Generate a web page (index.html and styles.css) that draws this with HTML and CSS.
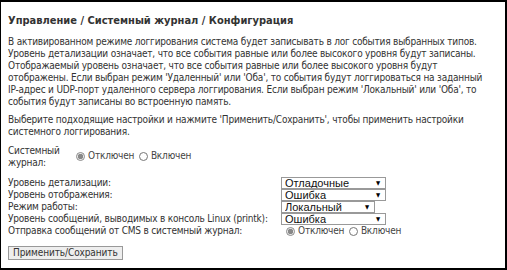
FILE: index.html
```html
<!DOCTYPE html>
<html lang="ru">
<head>
    <meta charset="UTF-8">
    <title>Системный журнал</title>
    <link rel="stylesheet" href="styles.css">
</head>
<body>
    <div class="frame">
        <div class="title">Управление / Системный журнал / Конфигурация</div>

        <p class="info">В активированном режиме логгирования система будет записывать в лог события выбранных типов.<br>
            Уровень детализации означает, что все события равные или более высокого уровня будут записаны.<br>
            Отображаемый уровень означает, что все события равные или более высокого уровня будут<br>
            отображены. Если выбран режим 'Удаленный' или 'Оба', то события будут логгироваться на заданный<br>
            IP-адрес и UDP-порт удаленного сервера логгирования. Если выбран режим 'Локальный' или 'Оба', то<br>
            события будут записаны во встроенную память.</p>

        <p class="info note">Выберите подходящие настройки и нажмите 'Применить/Сохранить', чтобы применить настройки<br>
            системного логгирования.</p>

        <table class="log-state">
            <tr>
                <td class="state-label">Системный журнал:</td>
                <td>
                    <label class="radio"><input type="radio" name="logState" checked> Отключен</label>
                    <label class="radio"><input type="radio" name="logState"> Включен</label>
                </td>
            </tr>
        </table>

        <table class="settings">
            <tr>
                <td class="name">Уровень детализации:</td>
                <td>
                    <span class="select wide">
                        <select>
                            <option>Отладочные</option>
                        </select>
                    </span>
                </td>
            </tr>
            <tr>
                <td class="name">Уровень отображения:</td>
                <td>
                    <span class="select wide">
                        <select>
                            <option>Ошибка</option>
                        </select>
                    </span>
                </td>
            </tr>
            <tr>
                <td class="name">Режим работы:</td>
                <td>
                    <span class="select mode">
                        <select>
                            <option>Локальный</option>
                        </select>
                    </span>
                </td>
            </tr>
            <tr>
                <td class="name">Уровень сообщений, выводимых в консоль Linux (printk):</td>
                <td>
                    <span class="select wide">
                        <select>
                            <option>Ошибка</option>
                        </select>
                    </span>
                </td>
            </tr>
            <tr>
                <td class="name">Отправка сообщений от CMS в системный журнал:</td>
                <td class="cms">
                    <label class="radio"><input type="radio" name="cmsLog" checked> Отключен</label>
                    <label class="radio"><input type="radio" name="cmsLog"> Включен</label>
                </td>
            </tr>
        </table>

        <button class="apply-button">Применить/Сохранить</button>
    </div>
</body>
</html>
```

FILE: styles.css
```css
body {
    margin: 0;
    background-color: #fff;
}

.frame {
    box-sizing: border-box;
    width: 507px;
    height: 270px;
    border: 2px solid #000;
    border-left-width: 1px;
    padding: 13px 6px 0 7px;
    font-family: 'DejaVu Sans Condensed', 'DejaVu Sans', sans-serif;
    font-size: 10px;
    letter-spacing: -0.2px;
    line-height: 12px;
    color: #333;
}

.title {
    font-weight: bold;
    font-size: 11px;
    letter-spacing: 0;
    margin-bottom: 9px;
}

.info {
    margin: 0 0 6px 0;
    white-space: nowrap;
}

.info.note {
    margin-bottom: 7px;
}

.log-state {
    border-collapse: collapse;
}

.log-state td {
    padding: 0;
    vertical-align: middle;
}

.state-label {
    width: 68px;
}

.radio {
    display: inline-flex;
    align-items: center;
    gap: 3px;
    margin-right: 2px;
    color: #444;
}

.radio input {
    width: 9px;
    height: 9px;
    margin: 0;
    accent-color: #888;
}

.settings {
    border-collapse: collapse;
    margin-top: 8px;
}

.settings td {
    padding: 0;
    height: 12px;
    line-height: 12px;
}

.settings .name {
    width: 273px;
}

.settings .cms {
    padding-left: 5px;
}

.settings .cms .radio {
    vertical-align: top;
}

.select {
    position: relative;
    display: block;
}

.select select {
    appearance: none;
    display: block;
    box-sizing: border-box;
    width: 100%;
    font-family: 'Liberation Sans', Arial, sans-serif;
    font-size: 11px;
    letter-spacing: 0;
    height: 12px;
    line-height: 10px;
    padding: 0 0 0 3px;
    border: 1px solid #999;
    border-radius: 0;
    background-color: #fff;
    color: #111;
}

.select::after {
    content: "\25BC";
    position: absolute;
    right: 6px;
    top: 3px;
    font-size: 6px;
    line-height: 6px;
    color: #000;
    pointer-events: none;
}

.select.wide {
    width: 105px;
}

.select.mode {
    width: 94px;
}

.apply-button {
    display: block;
    margin-top: 9px;
    font-family: 'DejaVu Sans Condensed', 'DejaVu Sans', sans-serif;
    font-size: 10px;
    letter-spacing: -0.1px;
    color: #333;
    height: 14px;
    line-height: 12px;
    padding: 0 4px;
    border: 1px solid #999;
    border-radius: 0;
    background-color: #eee;
}
```
